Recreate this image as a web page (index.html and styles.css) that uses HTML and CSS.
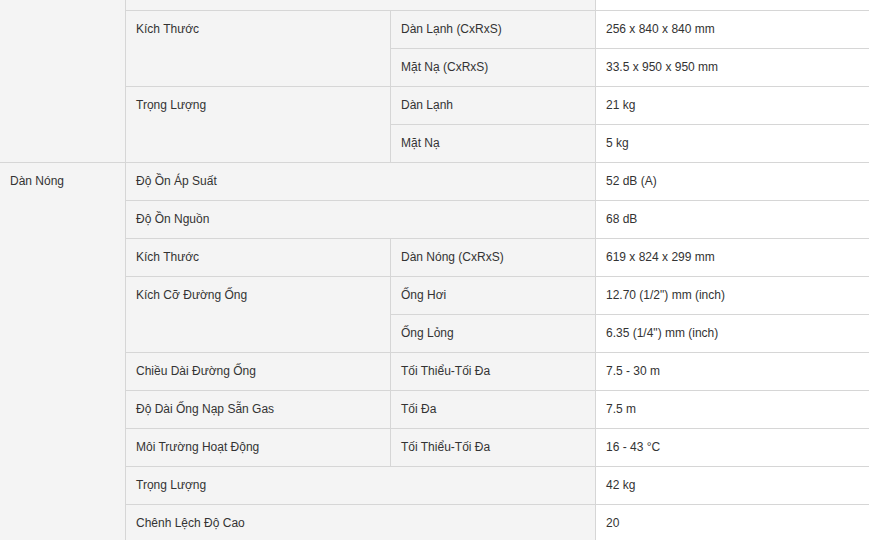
FILE: index.html
```html
<!DOCTYPE html>
<html lang="vi">
<head>
<meta charset="utf-8">
<title>Thông số kỹ thuật</title>
<link rel="stylesheet" href="styles.css">
</head>
<body>
<table class="spec">
  <colgroup>
    <col class="c1"><col class="c2"><col class="c3"><col class="c4">
  </colgroup>
  <tbody>
    <tr class="cut">
      <td class="lbl group" rowspan="5"></td>
      <td class="lbl" colspan="2"></td>
      <td class="val"></td>
    </tr>
    <tr>
      <td class="lbl" rowspan="2">Kích Thước</td>
      <td class="lbl sub">Dàn Lạnh (CxRxS)</td>
      <td class="val">256 x 840 x 840 mm</td>
    </tr>
    <tr>
      <td class="lbl sub">Mặt Nạ (CxRxS)</td>
      <td class="val">33.5 x 950 x 950 mm</td>
    </tr>
    <tr>
      <td class="lbl" rowspan="2">Trọng Lượng</td>
      <td class="lbl sub">Dàn Lạnh</td>
      <td class="val">21 kg</td>
    </tr>
    <tr>
      <td class="lbl sub">Mặt Nạ</td>
      <td class="val">5 kg</td>
    </tr>
    <tr>
      <td class="lbl group" rowspan="10">Dàn Nóng</td>
      <td class="lbl" colspan="2">Độ Ồn Áp Suất</td>
      <td class="val">52 dB (A)</td>
    </tr>
    <tr>
      <td class="lbl" colspan="2">Độ Ồn Nguồn</td>
      <td class="val">68 dB</td>
    </tr>
    <tr>
      <td class="lbl">Kích Thước</td>
      <td class="lbl sub">Dàn Nóng (CxRxS)</td>
      <td class="val">619 x 824 x 299 mm</td>
    </tr>
    <tr>
      <td class="lbl" rowspan="2">Kích Cỡ Đường Ống</td>
      <td class="lbl sub">Ống Hơi</td>
      <td class="val">12.70 (1/2") mm (inch)</td>
    </tr>
    <tr>
      <td class="lbl sub">Ống Lỏng</td>
      <td class="val">6.35 (1/4") mm (inch)</td>
    </tr>
    <tr>
      <td class="lbl">Chiều Dài Đường Ống</td>
      <td class="lbl sub">Tối Thiểu-Tối Đa</td>
      <td class="val">7.5 - 30 m</td>
    </tr>
    <tr>
      <td class="lbl">Độ Dài Ống Nạp Sẵn Gas</td>
      <td class="lbl sub">Tối Đa</td>
      <td class="val">7.5 m</td>
    </tr>
    <tr>
      <td class="lbl">Môi Trường Hoạt Động</td>
      <td class="lbl sub">Tối Thiểu-Tối Đa</td>
      <td class="val">16 - 43 °C</td>
    </tr>
    <tr>
      <td class="lbl" colspan="2">Trọng Lượng</td>
      <td class="val">42 kg</td>
    </tr>
    <tr>
      <td class="lbl" colspan="2">Chênh Lệch Độ Cao</td>
      <td class="val">20</td>
    </tr>
  </tbody>
</table>
</body>
</html>
```
FILE: styles.css
```css
html, body {
  margin: 0;
  padding: 0;
  background: #ffffff;
  overflow: hidden;
}

.spec {
  width: 869px;
  table-layout: fixed;
  border-collapse: separate;
  border-spacing: 0;
  font-family: "Liberation Sans", Arial, sans-serif;
  font-size: 12px;
  line-height: 17px;
  color: #333333;
}

.c1 { width: 126px; }
.c2 { width: 265px; }
.c3 { width: 205px; }
.c4 { width: 273px; }

.spec td {
  box-sizing: border-box;
  padding: 10px 10px;
  height: 38px;
  vertical-align: top;
  text-align: left;
  border-bottom: 1px solid #d6d6d6;
  border-right: 1px solid #d6d6d6;
}

.spec td.val {
  border-right: none;
  background: #ffffff;
}

.spec td.lbl {
  background: #f4f4f4;
}

.spec tr.cut td {
  height: 11px;
  padding: 0;
}
```
